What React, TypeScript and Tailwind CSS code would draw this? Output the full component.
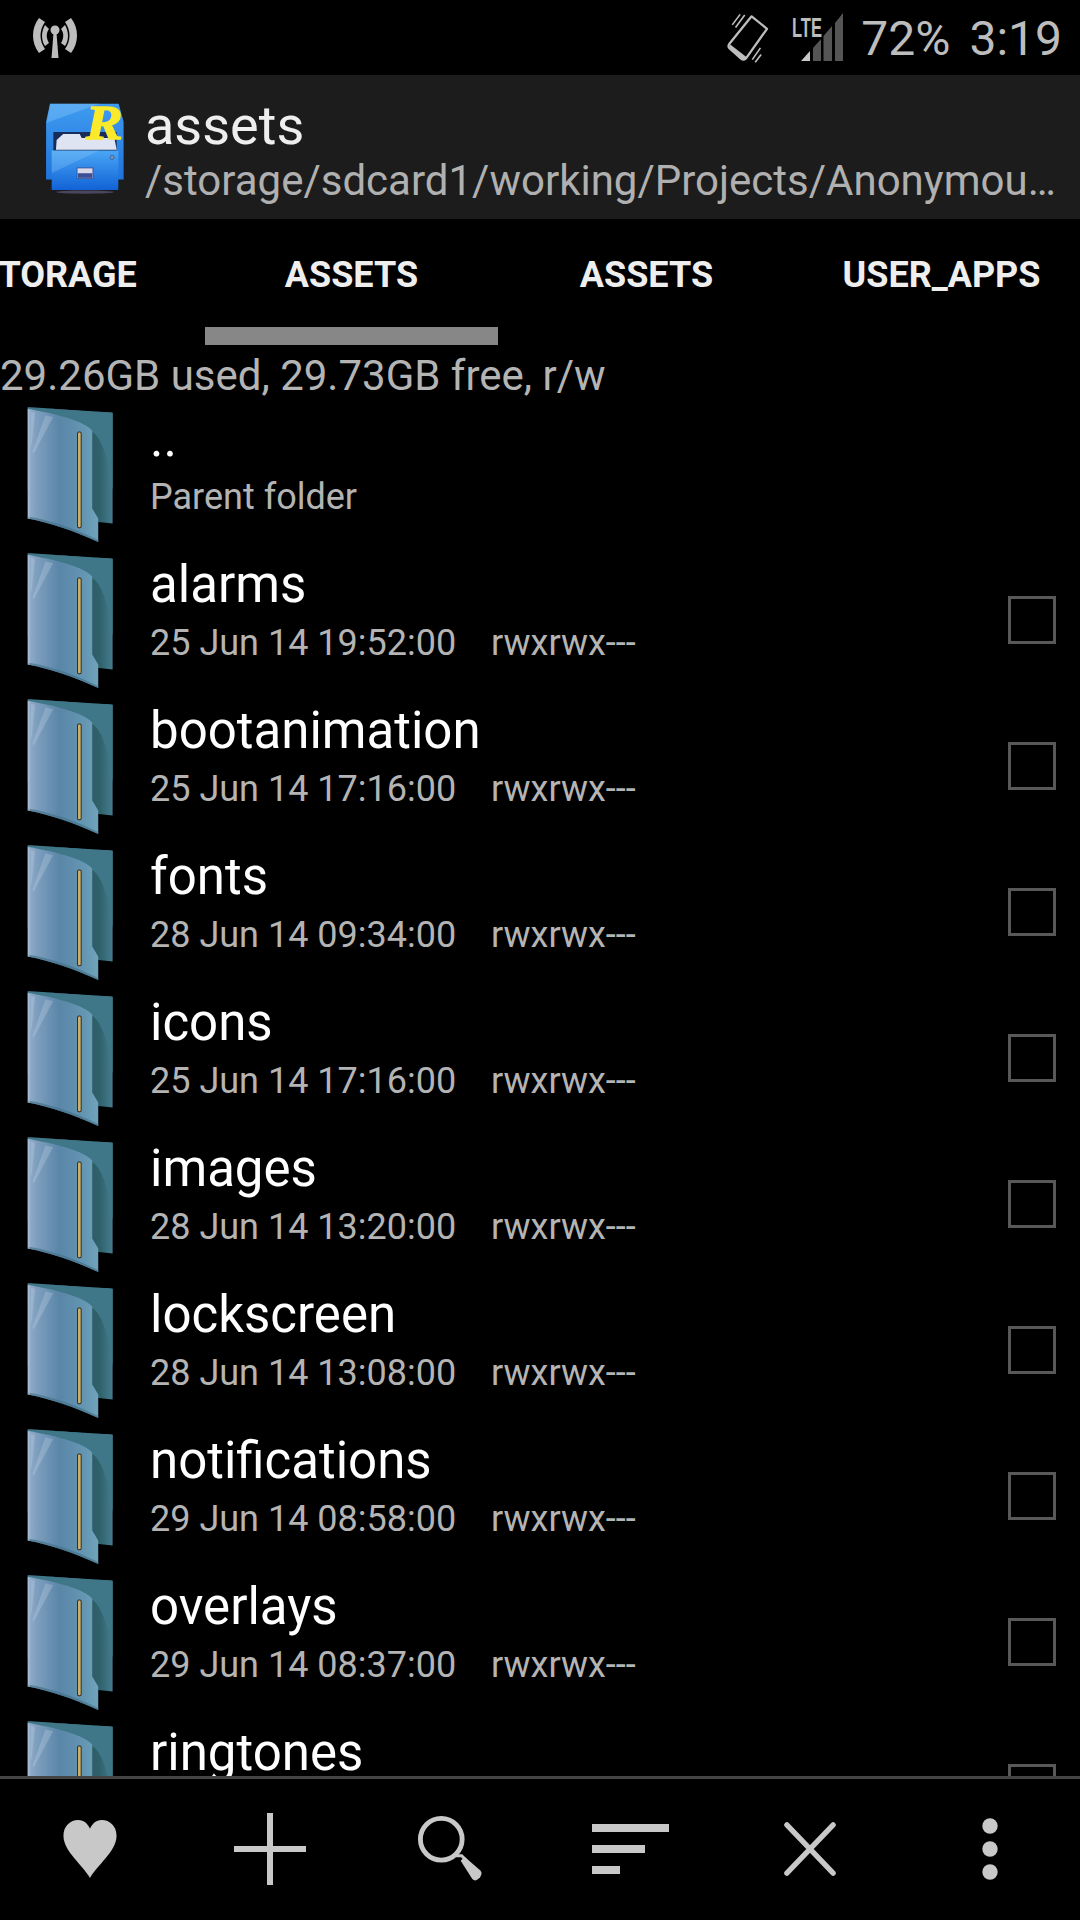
const rows = [
  { n: "alarms", d: "25 Jun 14 19:52:00" },
  { n: "bootanimation", d: "25 Jun 14 17:16:00" },
  { n: "fonts", d: "28 Jun 14 09:34:00" },
  { n: "icons", d: "25 Jun 14 17:16:00" },
  { n: "images", d: "28 Jun 14 13:20:00" },
  { n: "lockscreen", d: "28 Jun 14 13:08:00" },
  { n: "notifications", d: "29 Jun 14 08:58:00" },
  { n: "overlays", d: "29 Jun 14 08:37:00" },
  { n: "ringtones", d: "" },
];

function Folder() {
  return (
    <svg width="87" height="137" viewBox="80 48 260 410" className="shrink-0">
      <defs>
        <linearGradient id="fg" x1="0" y1="0" x2="1" y2="0">
          <stop offset="0" stopColor="#96aecb" />
          <stop offset="0.12" stopColor="#7f9fbf" />
          <stop offset="0.45" stopColor="#5a86a8" />
          <stop offset="0.8" stopColor="#6496b2" />
          <stop offset="1" stopColor="#70a3bb" />
        </linearGradient>
        <linearGradient id="fb" x1="0" y1="0" x2="1" y2="0">
          <stop offset="0.6" stopColor="#28555f" />
          <stop offset="0.85" stopColor="#30626c" />
          <stop offset="1" stopColor="#457c8f" />
        </linearGradient>
      </defs>
      <path d="M82 52C150 56 270 64 336 68L336 400L280 394L82 300Z" fill="url(#fb)" />
      <path d="M82 52C150 56 270 64 336 68L336 300C325 220 310 150 275 125C240 90 150 70 82 56Z" fill="#3f7789" />
      <path d="M82 56C150 68 255 92 275 122L275 355L293 385L293 455C220 422 150 398 82 385Z" fill="url(#fg)" />
      <path d="M92 66L104 68L94 160L90 175ZM135 76L158 82L100 190L96 185Z" fill="#c4d4e8" opacity="0.3" />
      <path d="M82 385C150 398 220 422 293 455L293 449C220 414 150 390 82 379Z" fill="#3f6f86" opacity="0.6" />
      <path d="M82 56L82 385L88 386L88 60Z" fill="#b7c8dc" opacity="0.5" />
      <rect x="231" y="126" width="11" height="286" rx="4" fill="#cdb06c" stroke="#2b2f2e" strokeWidth="3" />
    </svg>
  );
}

function Logo() {
  return (
    <svg width="80" height="94" viewBox="136 305 240 285" className="shrink-0">
      <defs>
        <linearGradient id="lt" x1="0" y1="0" x2="0" y2="1">
          <stop offset="0" stopColor="#3f9bf0" />
          <stop offset="1" stopColor="#1f74dc" />
        </linearGradient>
        <linearGradient id="ld" x1="0" y1="0" x2="0" y2="1">
          <stop offset="0" stopColor="#4aa6f5" />
          <stop offset="1" stopColor="#1162d6" />
        </linearGradient>
      </defs>
      <ellipse cx="256" cy="578" rx="88" ry="5" fill="#4a4660" />
      <path d="M150 310L358 310L373 365L373 540L138 540L138 365Z" fill="url(#lt)" />
      <path d="M150 310L300 310L140 368Z" fill="#7cc2f8" opacity="0.45" />
      <rect x="160" y="396" width="192" height="58" fill="#182c5a" />
      <path d="M170 420L190 402L240 402L246 414L345 414L352 450L168 450Z" fill="#dfe4f2" />
      <path d="M155 452L357 452L357 572L155 572Z" fill="url(#ld)" />
      <path d="M155 452L300 452L155 520Z" fill="#8ccbfa" opacity="0.3" />
      <rect x="232" y="505" width="48" height="32" fill="#d8d8e8" stroke="#2a3a80" strokeWidth="2" />
      <rect x="234" y="521" width="44" height="14" fill="#3c4f96" />
      <circle cx="338" cy="473" r="6" fill="#8a97a8" stroke="#214a8a" strokeWidth="2" />
      <text x="258" y="417" fill="#fbe92b" stroke="#fbe92b" strokeWidth="4" fontFamily="'Liberation Serif', serif" fontStyle="italic" fontWeight="700" fontSize="150" textLength="112" lengthAdjust="spacingAndGlyphs">R</text>
    </svg>
  );
}

function Row({ n, d, sub, check = true }: { n: string; d?: string; sub?: string; check?: boolean }) {
  return (
    <div className="relative flex h-[146px] shrink-0 pl-[27px] pt-[5px]">
      <Folder />
      <div className="ml-[36px] flex flex-col pt-[1px]">
        <div className="h-[64px] text-[51px] leading-[64px] text-white">{n}</div>
        <div className="mt-[-3px] flex h-[58px] text-[36px] leading-[58px] text-[#b4b4b4]">
          {sub ? <span>{sub}</span> : null}
          {d ? <span className="w-[341px]">{d}</span> : null}
          {d ? <span>rwxrwx---</span> : null}
        </div>
      </div>
      {check ? <div className="absolute left-[1008px] top-[49px] h-[48px] w-[48px] border-[3px] border-[#585858]" /> : null}
    </div>
  );
}

export default function App() {
  return (
    <div className="flex h-[1920px] w-[1080px] flex-col overflow-hidden bg-black font-['Roboto',sans-serif]">
      <div className="flex h-[75px] shrink-0 items-center pl-[31px] pr-[18px] text-[#bdbdbd]">
        <svg width="48" height="46" viewBox="0 0 48 46">
          <path d="M8 3C0 13 0 28 8 38L14 34C8 26 8 15 14 7Z" fill="#bdbdbd" />
          <path d="M40 3C48 13 48 28 40 38L34 34C40 26 40 15 34 7Z" fill="#bdbdbd" />
          <path d="M14 10C10 17 10 25 14 31L18 28C15 23 15 18 18 14Z" fill="#bdbdbd" />
          <path d="M34 10C38 17 38 25 34 31L30 28C33 23 33 18 30 14Z" fill="#bdbdbd" />
          <circle cx="24" cy="15" r="4.5" fill="#bdbdbd" />
          <path d="M22.5 18L25.5 18L27.5 43L20.5 43Z" fill="#bdbdbd" />
        </svg>
        <div className="flex-1" />
        <svg width="42" height="50" viewBox="20 23 128 150" className="mr-[23px]">
          <path d="M95 32L142 70L78 160C74 165 68 165 62 160L28 130C24 126 24 120 28 115Z" fill="none" stroke="#bdbdbd" strokeWidth="7" strokeLinejoin="round" />
          <path d="M30 118L82 158L74 166L62 162L26 130Z" fill="#bdbdbd" />
          <path d="M74 28L46 66M60 26L36 58M122 128L97 164M124 148L106 172" stroke="#bdbdbd" strokeWidth="5" fill="none" />
        </svg>
        <svg width="52" height="50" viewBox="0 0 52 50" className="mr-[17px]">
          <text x="0" y="24" fill="#bdbdbd" fontFamily="'Liberation Sans', sans-serif" fontWeight="700" fontSize="28" textLength="30" lengthAdjust="spacingAndGlyphs">LTE</text>
          <path d="M9 48L18 38L18 48Z" fill="#c8c8c8" />
          <path d="M21 48L21 35L29 26L29 48ZM31.5 48L31.5 23L40 13L40 48ZM43 48L43 10L51 0L51 48Z" fill="#555555" />
        </svg>
        <span className="pt-[2px] text-[48px] leading-[75px]">72%</span>
        <span className="ml-[19px] pt-[2px] text-[48px] leading-[75px]">3:19</span>
      </div>

      <div className="flex h-[144px] shrink-0 bg-[#1c1c1c] pl-[45px] pt-[27px]">
        <Logo />
        <div className="ml-[20px] mt-[-3px] flex w-[912px] flex-col">
          <div className="h-[54px] text-[54px] leading-[54px] text-[#eeeeee]">assets</div>
          <div className="truncate text-[42px] leading-[56px] text-[#b0b0b0]">/storage/sdcard1/working/Projects/Anonymous/assets</div>
        </div>
      </div>

      <div className="relative ml-[-91px] flex h-[126px] shrink-0">
        {["STORAGE", "ASSETS", "ASSETS", "USER_APPS"].map((t, i) => (
          <div key={i} className="flex h-[112px] w-[295px] shrink-0 items-center justify-center text-[36px] font-bold text-[#eeeeee]">{t}</div>
        ))}
        <div className="absolute left-[296px] top-[108px] h-[18px] w-[293px] bg-[#878787]" />
      </div>

      <div className="h-[56px] shrink-0 text-[42px] leading-[62px] text-[#b4b4b4]">29.26GB used, 29.73GB free, r/w</div>

      <div className="flex min-h-0 flex-1 flex-col overflow-hidden">
        <Row n=".." sub="Parent folder" check={false} />
        {rows.map((r) => (
          <Row key={r.n} n={r.n} d={r.d} />
        ))}
      </div>

      <div className="grid h-[144px] shrink-0 grid-cols-6 border-t-[3px] border-[#444444] pb-[2px]">
        <div className="flex items-center justify-center">
          <svg width="54" height="58" viewBox="0 0 54 59"><path d="M27 59C20 46 0 32 0 16C0 6 7 0 15 0C21 0 25 4 27 9C29 4 33 0 39 0C47 0 54 6 54 16C54 32 34 46 27 59Z" fill="#c8c8c8" /></svg>
        </div>
        <div className="flex items-center justify-center">
          <svg width="72" height="72" viewBox="0 0 72 72"><path d="M33 0H39V33H72V39H39V72H33V39H0V33H33Z" fill="#c8c8c8" /></svg>
        </div>
        <div className="flex items-center justify-center">
          <svg width="66" height="66" viewBox="0 0 66 68">
            <circle cx="24" cy="24" r="21.5" fill="none" stroke="#c8c8c8" strokeWidth="5" />
            <path d="M39 41L45 41L50 46" stroke="#c8c8c8" strokeWidth="3" fill="none" />
            <path d="M44 46L48 42L64 56C66 58 66 60 64 63L62 65C60 67 58 67 56 65Z" fill="#c8c8c8" />
          </svg>
        </div>
        <div className="flex items-center justify-center">
          <svg width="77" height="50" viewBox="0 0 77 50"><path d="M0 0H77V8H0ZM0 21H53V29H0ZM0 42H28V50H0Z" fill="#c8c8c8" /></svg>
        </div>
        <div className="flex items-center justify-center">
          <svg width="54" height="54" viewBox="0 0 54 56"><path d="M3 3L51 53M51 3L3 53" stroke="#c8c8c8" strokeWidth="5.5" strokeLinecap="round" fill="none" /></svg>
        </div>
        <div className="flex items-center justify-center">
          <svg width="16" height="62" viewBox="0 0 16 62"><circle cx="8" cy="8" r="7.7" fill="#c8c8c8" /><circle cx="8" cy="31" r="7.7" fill="#c8c8c8" /><circle cx="8" cy="54" r="7.7" fill="#c8c8c8" /></svg>
        </div>
      </div>
    </div>
  );
}
